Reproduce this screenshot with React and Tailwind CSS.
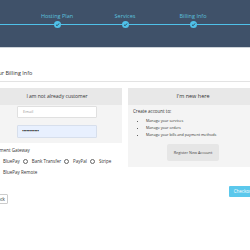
import React from "react";

function Check() {
  return (
    <span className="relative z-10 w-[7px] h-[7px] rounded-full bg-[#4fc1e9] flex items-center justify-center">
      <svg width="5" height="5" viewBox="0 0 10 10">
        <path d="M2 5.5 L4.2 7.5 L8 3" stroke="#2c3e50" strokeWidth="1.8" fill="none" />
      </svg>
    </span>
  );
}

function Step({ label }) {
  return (
    <div className="w-[68px] flex flex-col items-center">
      <div className="text-[5.5px] leading-[7px] text-[#5bc0de] whitespace-nowrap">{label}</div>
      <div className="mt-[1px]"><Check /></div>
    </div>
  );
}

function Radio({ label }) {
  return (
    <span className="flex items-center gap-[4px] whitespace-nowrap">
      <span className="w-[5px] h-[5px] rounded-full border border-[#666] bg-white"></span>
      <span>{label}</span>
    </span>
  );
}

export default function App() {
  return (
    <div className="w-[250px] h-[250px] overflow-hidden bg-white" style={{ fontFamily: '"Open Sans", "Noto Sans", sans-serif' }}>
      <div className="h-[48px] bg-[#3f5169] border-b border-[#cdd3d9] pt-[13px]">
        <div className="relative flex justify-center">
          <div className="absolute left-0 right-0 top-[11px] h-px bg-[#4fc1e9]"></div>
          <Step label="Hosting Plan" />
          <Step label="Services" />
          <Step label="Billing Info" />
        </div>
      </div>
      <div className="ml-[-8px] w-[266px] pt-[22px]">
        <div className="text-[5.5px] leading-[7px] text-[#333] pb-[4px] border-b border-[#e3e3e3]">Your Billing Info</div>
        <div className="grid grid-cols-2 gap-[6px] mt-[6px] items-start">
          <div>
            <div className="bg-[#f4f4f4]">
              <div className="h-[17px] bg-[#e8e8e8] flex items-center justify-center text-[5px] text-[#333] font-medium">I am not already customer</div>
              <div className="flex flex-col items-center pt-[1px] pb-[5px] gap-[7px]">
                <div className="w-[80px] h-[12px] bg-white border border-[#e0e0e0] rounded-[1px] text-[4px] text-[#999] pl-[5px] flex items-center">Email</div>
                <div className="w-[80px] h-[13px] bg-[#e8f0fe] border border-[#d7dfec] rounded-[1px] text-[5px] text-[#222] pl-[4px] flex items-center tracking-[-0.5px]">••••••••••••</div>
              </div>
            </div>
            <div className="pt-[4px] text-[4.5px] text-[#333]">
              <div className="leading-[7px]">Payment Gateway</div>
              <div className="flex items-center gap-[3px] pl-[2px] mt-[4px] leading-[7px]">
                <Radio label="BluePay" />
                <Radio label="Bank Transfer" />
                <Radio label="PayPal" />
                <Radio label="Stripe" />
              </div>
              <div className="pl-[11px] mt-[4px] leading-[7px]">BluePay Remote</div>
            </div>
          </div>
          <div className="bg-[#f4f4f4]">
            <div className="h-[17px] bg-[#e8e8e8] flex items-center justify-center text-[5.5px] text-[#333] font-medium">I'm new here</div>
            <div className="px-[5px] pt-[3px] pb-[6px] text-[#333]">
              <div className="text-[4.5px] leading-[7px]">Create account to:</div>
              <ul className="mt-[2px] pl-[13px] list-disc text-[3.7px] leading-[7px]">
                <li>Manage your services</li>
                <li>Manage your orders</li>
                <li>Manage your bills and payment methods</li>
              </ul>
              <div className="flex justify-center mt-[6px]">
                <div className="w-[52px] h-[17px] bg-[#e6e6e6] rounded-[2px] flex items-center justify-center text-[3.8px] text-[#444]">Register New Account</div>
              </div>
            </div>
          </div>
        </div>
        <div className="flex justify-between items-start mt-[10px]">
          <div className="mt-[8px] w-[16px] h-[10px] border border-[#ccc] rounded-[1px] bg-white flex items-center justify-center text-[4.5px] text-[#333]">Back</div>
          <div className="w-[29px] h-[11px] bg-[#5bc8ec] rounded-[1px] flex items-center justify-center text-[4.5px] text-white">Checkout</div>
        </div>
      </div>
    </div>
  );
}
